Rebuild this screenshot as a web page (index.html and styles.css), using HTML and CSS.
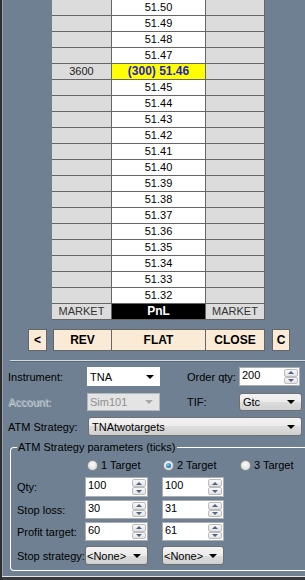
FILE: index.html
```html
<!DOCTYPE html>
<html lang="en">
<head>
    <meta charset="UTF-8">
    <meta name="viewport" content="width=device-width, initial-scale=1.0">
    <title>SuperDOM</title>
    <link rel="stylesheet" href="styles.css">
</head>
<body>
<div class="frame">
    <div class="ladder">
        <div class="cell side"></div><div class="cell price">51.50</div><div class="cell side"></div>
        <div class="cell side"></div><div class="cell price">51.49</div><div class="cell side"></div>
        <div class="cell side"></div><div class="cell price">51.48</div><div class="cell side"></div>
        <div class="cell side"></div><div class="cell price">51.47</div><div class="cell side"></div>
        <div class="cell side">3600</div><div class="cell price current">(300) 51.46</div><div class="cell side"></div>
        <div class="cell side"></div><div class="cell price">51.45</div><div class="cell side"></div>
        <div class="cell side"></div><div class="cell price">51.44</div><div class="cell side"></div>
        <div class="cell side"></div><div class="cell price">51.43</div><div class="cell side"></div>
        <div class="cell side"></div><div class="cell price">51.42</div><div class="cell side"></div>
        <div class="cell side"></div><div class="cell price">51.41</div><div class="cell side"></div>
        <div class="cell side"></div><div class="cell price">51.40</div><div class="cell side"></div>
        <div class="cell side"></div><div class="cell price">51.39</div><div class="cell side"></div>
        <div class="cell side"></div><div class="cell price">51.38</div><div class="cell side"></div>
        <div class="cell side"></div><div class="cell price">51.37</div><div class="cell side"></div>
        <div class="cell side"></div><div class="cell price">51.36</div><div class="cell side"></div>
        <div class="cell side"></div><div class="cell price">51.35</div><div class="cell side"></div>
        <div class="cell side"></div><div class="cell price">51.34</div><div class="cell side"></div>
        <div class="cell side"></div><div class="cell price">51.33</div><div class="cell side"></div>
        <div class="cell side"></div><div class="cell price">51.32</div><div class="cell side"></div>
        <div class="cell side market">MARKET</div><div class="cell pnl">PnL</div><div class="cell side market">MARKET</div>
    </div>

    <div class="actions">
        <div class="btn btn-small">&lt;</div>
        <div class="btn btn-rev">REV</div>
        <div class="btn btn-flat">FLAT</div>
        <div class="btn btn-close">CLOSE</div>
        <div class="btn btn-small btn-c">C</div>
    </div>

    <div class="sep"></div>

    <div class="form">
        <div class="row row-1">
            <span class="label">Instrument:</span>
            <div class="combo combo-white w-73"><span>TNA</span><span class="arrow"></span></div>
            <span class="label label-right">Order qty:</span>
            <div class="spin w-61">
                <span class="val">200</span>
                <span class="arrows"><span class="up"></span><span class="dn"></span></span>
            </div>
        </div>
        <div class="row row-2">
            <span class="label disabled">Account:</span>
            <div class="combo combo-disabled w-73"><span>Sim101</span><span class="arrow"></span></div>
            <span class="label label-right">TIF:</span>
            <div class="combo combo-btn w-63"><span>Gtc</span><span class="arrow"></span></div>
        </div>
        <div class="row row-3">
            <span class="label label-atm">ATM Strategy:</span>
            <div class="combo combo-btn w-214"><span>TNAtwotargets</span><span class="arrow"></span></div>
        </div>
    </div>

    <fieldset class="group">
        <legend>ATM Strategy parameters (ticks)</legend>
        <div class="radios">
            <label class="radio r1"><span class="dot"></span>1 Target</label>
            <label class="radio r2"><span class="dot checked"></span>2 Target</label>
            <label class="radio"><span class="dot"></span>3 Target</label>
        </div>
        <div class="prow prow-qty">
            <span class="plabel">Qty:</span>
            <div class="spin w-63"><span class="val">100</span><span class="arrows"><span class="up"></span><span class="dn"></span></span></div>
            <div class="spin w-62 second"><span class="val">100</span><span class="arrows"><span class="up"></span><span class="dn"></span></span></div>
        </div>
        <div class="prow prow-stop">
            <span class="plabel">Stop loss:</span>
            <div class="spin w-63"><span class="val">30</span><span class="arrows"><span class="up"></span><span class="dn"></span></span></div>
            <div class="spin w-62 second"><span class="val">31</span><span class="arrows"><span class="up"></span><span class="dn"></span></span></div>
        </div>
        <div class="prow prow-profit">
            <span class="plabel">Profit target:</span>
            <div class="spin w-63"><span class="val">60</span><span class="arrows"><span class="up"></span><span class="dn"></span></span></div>
            <div class="spin w-62 second"><span class="val">61</span><span class="arrows"><span class="up"></span><span class="dn"></span></span></div>
        </div>
        <div class="prow prow-strategy">
            <span class="plabel">Stop strategy:</span>
            <div class="combo combo-btn combo-none w-63"><span>&lt;None&gt;</span><span class="arrow"></span></div>
            <div class="combo combo-btn combo-none w-62 second"><span>&lt;None&gt;</span><span class="arrow"></span></div>
        </div>
    </fieldset>

    <div class="footer"></div>
</div>
</body>
</html>
```

FILE: styles.css
```css
* {
    box-sizing: border-box;
}
html, body {
    margin: 0;
    padding: 0;
}
body {
    width: 305px;
    height: 580px;
    overflow: hidden;
    background-color: #6f8092;
    font-family: "Liberation Sans", Arial, sans-serif;
    font-size: 11px;
    color: #000;
}
.frame {
    height: 580px;
    border-left: 2px solid #2e2e2e;
    box-shadow: inset 1px 0 #98a6b4;
    display: flex;
    flex-direction: column;
}

/* price ladder */
.ladder {
    margin-left: 50px;
    width: 213px;
    display: grid;
    grid-template-columns: 60px 94px 59px;
}
.cell {
    height: 16px;
    line-height: 15px;
    text-align: center;
    border-right: 1px solid #666;
    border-bottom: 1px solid #666;
    white-space: nowrap;
}
.side {
    background-color: #dcdcdc;
    color: #222;
}
.price {
    background-color: #fff;
}
.current {
    background-color: #ffff00;
    color: #1f1fc4;
    font-weight: bold;
    font-size: 12px;
}
.market {
    color: #333;
}
.pnl {
    background-color: #000;
    color: #fff;
    font-weight: bold;
    font-size: 12px;
}

/* action buttons */
.actions {
    display: flex;
    margin: 9px 0 0 26px;
    height: 22px;
}
.btn {
    background-color: #faebd7;
    border: 1px solid #666;
    font-weight: bold;
    font-size: 12px;
    display: flex;
    align-items: center;
    justify-content: center;
}
.btn-small {
    width: 19px;
    margin-right: 6px;
}
.btn-rev {
    width: 59px;
}
.btn-flat {
    width: 94px;
    border-left: none;
}
.btn-close {
    width: 59px;
    border-left: none;
}
.btn-c {
    width: 18px;
    margin: 0 0 0 7px;
}

.sep {
    margin: 9px 0 0 8px;
    height: 2px;
    border-top: 1px solid #d3dae1;
    border-bottom: 1px solid #5b6875;
}

/* order form */
.form {
    padding-left: 6px;
}
.row {
    display: flex;
    align-items: center;
}
.row-1 {
    margin-top: 5px;
    height: 19px;
}
.row-2 {
    margin-top: 7px;
    height: 18px;
}
.row-3 {
    margin-top: 6px;
    height: 19px;
}
.label {
    width: 79px;
}
.label-atm {
    width: 80px;
}
.label-right {
    width: 52px;
    margin-left: 27px;
}
.disabled {
    color: #a3adb7;
    text-shadow: 1px 1px 0 #c9d1d9;
}
.w-61 { width: 61px; }
.w-62 { width: 62px; }
.w-63 { width: 63px; }
.w-73 { width: 73px; }
.w-214 { width: 214px; }

.combo {
    height: 100%;
    display: flex;
    align-items: center;
    justify-content: space-between;
    padding: 0 6px 0 3px;
    white-space: nowrap;
}
.combo-white {
    background-color: #fff;
}
.combo-disabled {
    background-color: #e4e4e4;
    border: 1px solid #b3b8bd;
    color: #8e8e8e;
    padding-left: 2px;
}
.combo-disabled .arrow {
    border-top-color: #a7a7a7;
}
.combo-btn {
    border: 1px solid #707070;
    border-radius: 3px;
    background: linear-gradient(#f3f3f3, #ebebeb 50%, #dddddd 50%, #d0d0d0);
}
.combo-none {
    padding-left: 1px;
}
.arrow {
    width: 0;
    height: 0;
    border-left: 4px solid transparent;
    border-right: 4px solid transparent;
    border-top: 4px solid #000;
}

.spin {
    height: 100%;
    display: flex;
    background-color: #fff;
    border: 1px solid #abadb3;
}
.val {
    flex: 1;
    padding: 1px 0 0 2px;
    line-height: 12px;
}
.arrows {
    width: 15px;
    display: flex;
    flex-direction: column;
    padding: 1px 1px 1px 0;
}
.up, .dn {
    flex: 1;
    border: 1px solid #bdbdbd;
    border-radius: 2px;
    background: linear-gradient(#f8f8f8, #e2e2e2);
    display: flex;
    align-items: center;
    justify-content: center;
}
.up::after, .dn::after {
    content: "";
    width: 0;
    height: 0;
    border-left: 3px solid transparent;
    border-right: 3px solid transparent;
}
.up::after {
    border-bottom: 3px solid #4f6184;
}
.dn::after {
    border-top: 3px solid #4f6184;
}

/* strategy group, runs on past the right edge of the window */
.group {
    margin: 5px 0 0 8px;
    padding: 0 0 5px 6px;
    width: 295px;
    min-width: 0;
    border: 1px solid #fff;
    border-right: none;
    border-radius: 4px 0 0 4px;
}
.group legend {
    padding: 0 1px;
    line-height: 13px;
    font-size: 11px;
}
.radios {
    display: flex;
    align-items: center;
    height: 14px;
    margin-top: 4px;
    padding-left: 70px;
}
.radio {
    display: flex;
    align-items: center;
    white-space: nowrap;
}
.r1 { width: 76px; }
.r2 { width: 77px; }
.dot {
    width: 11px;
    height: 11px;
    margin-right: 3px;
    border-radius: 50%;
    border: 1px solid #8e8f8f;
    background: radial-gradient(circle at 50% 40%, #fbfbfb, #d4d4d4);
    display: flex;
    align-items: center;
    justify-content: center;
}
.dot.checked::after {
    content: "";
    width: 5px;
    height: 5px;
    border-radius: 50%;
    background: radial-gradient(circle at 40% 35%, #7fd0f5, #1f7fbf 60%, #0f4e7c);
}
.prow {
    display: flex;
    align-items: center;
}
.prow-qty {
    margin-top: 5px;
    height: 20px;
}
.prow-stop {
    margin-top: 3px;
    height: 19px;
}
.prow-profit {
    margin-top: 3px;
    height: 19px;
}
.prow-strategy {
    margin-top: 5px;
    height: 19px;
}
.plabel {
    width: 68px;
    white-space: nowrap;
}
.second {
    margin-left: 14px;
}

.footer {
    margin-top: 5px;
    flex: 1;
    border-top: 1px solid #dfe5ea;
    background-color: #3a3a3a;
}
```
